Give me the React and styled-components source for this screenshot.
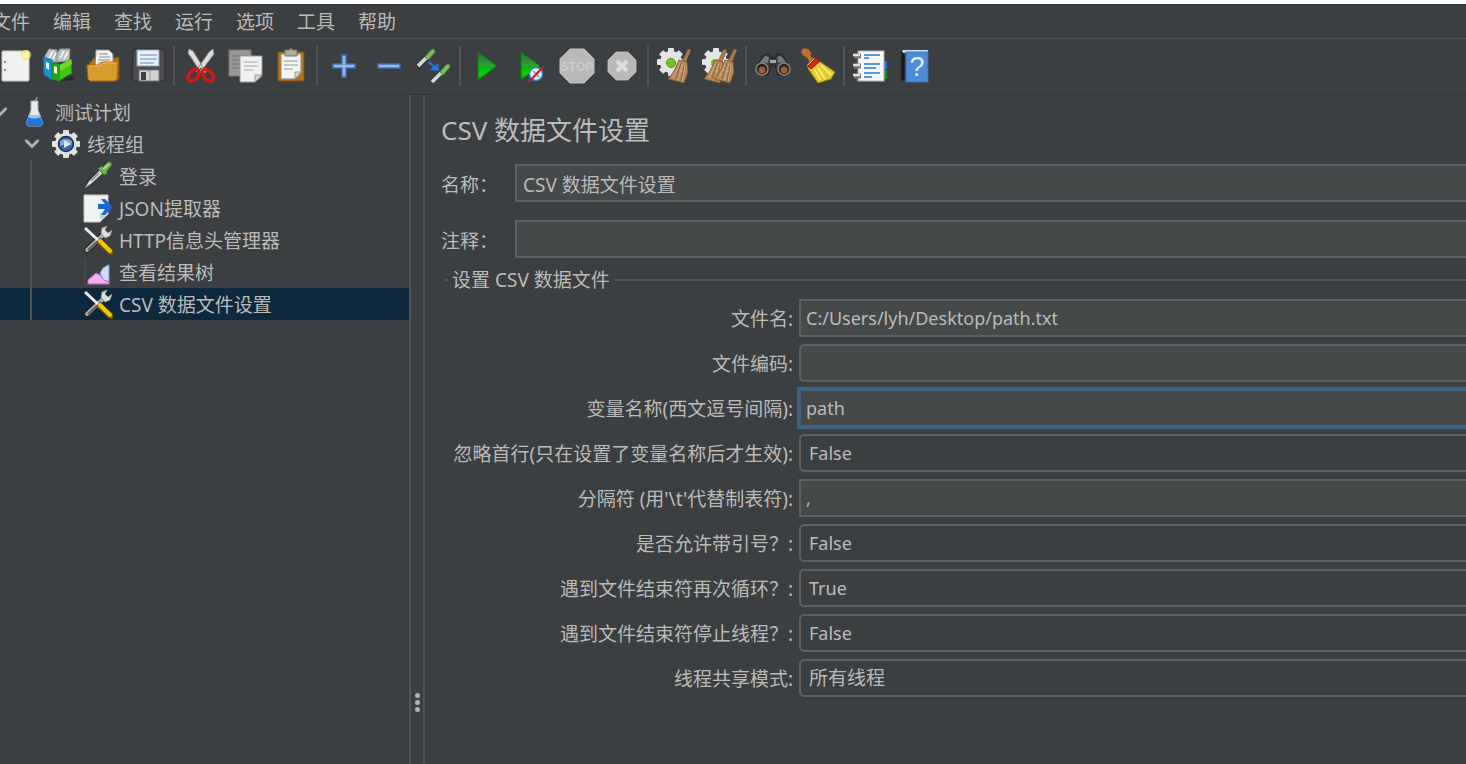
import React, { useState } from 'react';
import styled, { createGlobalStyle, ThemeProvider } from 'styled-components';

const theme = {
  colors: {
    background: '#3c3f41',
    field: '#45494a',
    fieldBorder: '#5e6061',
    line: '#515355',
    darkLine: '#333638',
    text: '#bbbbbb',
    selection: '#0d293e',
    focus: '#3d6185',
  },
  fonts: {
    body: '"Noto Sans", "Noto Sans CJK SC", sans-serif',
  },
  fontSizes: {
    sm: '18px',
    md: '19px',
    xl: '26px',
  },
};

const MENUS = ['文件', '编辑', '查找', '运行', '选项', '工具', '帮助'];

const TREE = [
  { id: 'plan', label: '测试计划', icon: 'flask', level: 0, open: true },
  { id: 'group', label: '线程组', icon: 'gear', level: 1, open: true },
  { id: 'login', label: '登录', icon: 'pipette', level: 2 },
  { id: 'json', label: 'JSON提取器', icon: 'extract', level: 2 },
  { id: 'header', label: 'HTTP信息头管理器', icon: 'tools', level: 2 },
  { id: 'results', label: '查看结果树', icon: 'chart', level: 2 },
  { id: 'csv', label: 'CSV 数据文件设置', icon: 'tools', level: 2 },
];

const FIELDS = [
  { id: 'filename', label: '文件名:', value: 'C:/Users/lyh/Desktop/path.txt' },
  { id: 'encoding', label: '文件编码:', value: '', rounded: true },
  { id: 'variables', label: '变量名称(西文逗号间隔):', value: 'path', focused: true },
  { id: 'ignoreFirst', label: '忽略首行(只在设置了变量名称后才生效):', options: ['False', 'True'] },
  { id: 'delimiter', label: "分隔符 (用'\\t'代替制表符):", value: ',' },
  { id: 'quoted', label: '是否允许带引号？:', options: ['False', 'True'] },
  { id: 'recycle', label: '遇到文件结束符再次循环？:', options: ['True', 'False'] },
  { id: 'stopThread', label: '遇到文件结束符停止线程？:', options: ['False', 'True'] },
  { id: 'shareMode', label: '线程共享模式:', options: ['所有线程', '当前线程组', '当前线程'], large: true },
];

const TOOLBAR = [
  [['新建', 'newFile'], ['模板', 'templates'], ['打开', 'open'], ['保存', 'save']],
  [['剪切', 'cut'], ['复制', 'copy'], ['粘贴', 'paste']],
  [['展开', 'plus'], ['折叠', 'minus'], ['切换', 'toggle']],
  [['启动', 'play'], ['不停顿启动', 'playNoPause'], ['停止', 'stop'], ['关闭', 'shutdown']],
  [['清除', 'clear'], ['清除全部', 'clearAll']],
  [['查找', 'search'], ['重置查找', 'broom']],
  [['函数助手', 'list'], ['帮助', 'help']],
];

const App = () => {
  const [selected, setSelected] = useState('csv');

  return (
    <ThemeProvider theme={theme}>
      <GlobalStyle />
      <Screen>
        <Window>
          <MenuBar>
            {MENUS.map(menu => <MenuButton key={menu} type="button">{menu}</MenuButton>)}
          </MenuBar>

          <Toolbar>
            {TOOLBAR.map((group, index) => (
              <React.Fragment key={group[0][1]}>
                {index > 0 && <Separator />}
                {group.map(([title, icon]) => (
                  <ToolButton key={icon} type="button" aria-label={title}>
                    <svg viewBox="0 0 36 36">{ICONS[icon]}</svg>
                  </ToolButton>
                ))}
              </React.Fragment>
            ))}
          </Toolbar>

          <Workspace>
            <TreePanel>
              {TREE.map(node => (
                <TreeRow
                  key={node.id}
                  type="button"
                  $selected={node.id === selected}
                  onClick={() => setSelected(node.id)}
                >
                  {node.level > 0 && <Indent />}
                  {node.level > 1 && <Guide />}
                  <Expander>{node.open && <ChevronIcon />}</Expander>
                  <NodeIcon viewBox="0 0 30 30">{ICONS[node.icon]}</NodeIcon>
                  <NodeLabel>{node.label}</NodeLabel>
                </TreeRow>
              ))}
            </TreePanel>

            <Splitter>
              <Dot />
              <Dot />
              <Dot />
            </Splitter>

            <Editor>
              <Title>CSV 数据文件设置</Title>
              <InfoRow>
                <InfoLabel htmlFor="name">名称：</InfoLabel>
                <TextField id="name" defaultValue="CSV 数据文件设置" $large />
              </InfoRow>
              <InfoRow>
                <InfoLabel htmlFor="comment">注释：</InfoLabel>
                <TextField id="comment" $large />
              </InfoRow>

              <Group>
                <Legend>设置 CSV 数据文件</Legend>
                <Fields>
                  {FIELDS.map(field => (
                    <React.Fragment key={field.id}>
                      <FieldLabel htmlFor={field.id}>{field.label}</FieldLabel>
                      {field.options ? (
                        <SelectField id={field.id} $large={field.large}>
                          {field.options.map(option => <option key={option}>{option}</option>)}
                        </SelectField>
                      ) : (
                        <TextField
                          id={field.id}
                          defaultValue={field.value}
                          $rounded={field.rounded}
                          $focused={field.focused}
                        />
                      )}
                    </React.Fragment>
                  ))}
                </Fields>
              </Group>
            </Editor>
          </Workspace>
        </Window>
      </Screen>
    </ThemeProvider>
  );
};

const GlobalStyle = createGlobalStyle`
  * {
    box-sizing: border-box;
  }

  body {
    margin: 0;
    background-color: ${theme.colors.background};
  }

  button, input, select {
    font: inherit;
    color: inherit;
  }
`;

const Screen = styled.div`
  min-height: 100vh;
  display: flex;
  flex-direction: column;
  overflow: hidden;
  border-top: 4px solid #ffffff;
`;

// The window hangs over both sides of the screen
const Window = styled.div`
  flex: 1;
  display: flex;
  flex-direction: column;
  margin: 0 -12px;
  background-color: ${props => props.theme.colors.background};
  color: ${props => props.theme.colors.text};
  font-family: ${props => props.theme.fonts.body};
  font-size: ${props => props.theme.fontSizes.md};
  line-height: 32px;
`;

const MenuBar = styled.nav`
  display: flex;
  gap: 23px;
  height: 35px;
  padding: 0 4px;
  border-top: 1px solid ${props => props.theme.colors.darkLine};
  border-bottom: 1px solid ${props => props.theme.colors.line};
`;

const MenuButton = styled.button`
  padding: 0;
  border: none;
  background: none;
`;

const Toolbar = styled.div`
  display: flex;
  align-items: center;
  height: 56px;
  padding: 0 2px 2px;
  border-bottom: 1px solid ${props => props.theme.colors.darkLine};
`;

const ToolButton = styled.button`
  display: flex;
  justify-content: center;
  flex: none;
  width: 45px;
  padding: 0;
  border: none;
  background: none;

  svg {
    width: 36px;
    height: 36px;
  }
`;

const Separator = styled.span`
  flex: none;
  width: 2px;
  height: 40px;
  margin: 0 3px;
  background-color: ${props => props.theme.colors.line};
`;

const Workspace = styled.div`
  flex: 1;
  display: flex;
`;

const TreePanel = styled.div`
  flex: none;
  width: 421px;
  padding-top: 1px;
`;

const TreeRow = styled.button`
  display: flex;
  align-items: center;
  width: 100%;
  height: 32px;
  padding: 0;
  border: none;
  text-align: left;
  white-space: nowrap;
  background-color: ${props => props.$selected ? props.theme.colors.selection : 'transparent'};
`;

const Indent = styled.span`
  width: 32px;
`;

const Guide = styled.span`
  align-self: stretch;
  width: 22px;
  margin-left: 10px;
  border-left: 2px solid ${props => props.theme.colors.line};
`;

const Expander = styled.span`
  display: flex;
  justify-content: center;
  width: 23px;
`;

const NodeIcon = styled.svg`
  width: 30px;
  height: 30px;
  margin: 0 6px 0 8px;
`;

const NodeLabel = styled.span`
  padding-top: 2px;
`;

const Splitter = styled.div`
  display: flex;
  flex-direction: column;
  justify-content: flex-end;
  align-items: center;
  gap: 2px;
  flex: none;
  width: 16px;
  padding-bottom: 52px;
  border: solid ${props => props.theme.colors.line};
  border-width: 0 2px;
`;

const Dot = styled.span`
  width: 5px;
  height: 5px;
  border-radius: 50%;
  background-color: #afb1b3;
`;

const Editor = styled.main`
  flex: 1;
  display: flex;
  flex-direction: column;
  min-width: 0;
  padding: 17px 0 0 16px;
`;

const Title = styled.h1`
  margin: 0 0 16px;
  font-size: ${props => props.theme.fontSizes.xl};
  font-weight: 400;
  line-height: 36px;
`;

const InfoRow = styled.div`
  display: flex;
  align-items: center;
  margin-bottom: 18px;
`;

const InfoLabel = styled.label`
  flex: none;
  width: 74px;
  padding-top: 4px;
`;

const TextField = styled.input`
  flex: 1;
  min-width: 0;
  height: 38px;
  padding: ${props => props.$large ? '2px 6px 0' : '0 5px'};
  outline: none;
  border: 2px solid ${props => props.$focused ? props.theme.colors.focus : props.theme.colors.fieldBorder};
  border-radius: ${props => props.$rounded ? '5px' : '0'};
  box-shadow: ${props => props.$focused ? `0 0 0 2px ${props.theme.colors.focus}` : 'none'};
  background-color: ${props => props.theme.colors.field};
  font-size: ${props => props.$large ? props.theme.fontSizes.md : props.theme.fontSizes.sm};
`;

const SelectField = styled.select`
  appearance: none;
  min-width: 0;
  height: 38px;
  padding: 0 8px;
  border: 2px solid ${props => props.theme.colors.fieldBorder};
  border-radius: 5px;
  background-color: ${props => props.theme.colors.background};
  font-size: ${props => props.$large ? props.theme.fontSizes.md : props.theme.fontSizes.sm};
`;

const Group = styled.fieldset`
  min-width: 0;
  margin: -8px 0 0 4px;
  padding: 0;
  border: 0 solid ${props => props.theme.colors.line};
  border-top-width: 2px;
`;

const Legend = styled.legend`
  margin-left: 3px;
  padding: 0 4px;
  line-height: 24px;
`;

const Fields = styled.div`
  display: grid;
  grid-template-columns: 348px 1fr;
  gap: 7px 6px;
  align-items: center;
  padding-top: 7px;
`;

const FieldLabel = styled.label`
  padding-top: 2px;
  text-align: right;
  white-space: nowrap;
`;

const ChevronIcon = () => (
  <svg width="16" height="12" viewBox="0 0 16 12" fill="none" stroke="#afb1b3" strokeWidth="3">
    <path d="M1.5 2 8 8.5 14.5 2" />
  </svg>
);

const Octagon = ({ r, label }) => (
  <>
    <path
      d="M-7.5-18H7.5L18-7.5V7.5L7.5 18H-7.5L-18 7.5V-7.5Z"
      transform={`translate(18 18) scale(${r / 18})`}
      fill="#b9b9b9"
      stroke="#c8c8c8"
    />
    {label}
  </>
);

const GearShape = ({ color = '#e4e4e4' }) => (
  <g>
    {[0, 45, 90, 135].map(angle => (
      <rect key={angle} x="-3" y="-14" width="6" height="28" rx="1" fill={color} transform={`rotate(${angle})`} />
    ))}
    <circle r="11" fill={color} />
  </g>
);

const BroomBrush = ({ x = 0 }) => (
  <g transform={`translate(${x} 0)`}>
    <path d="M31 1 34 2 29 14 25 13Z" fill="#a97c50" stroke="#70502f" strokeWidth=".6" />
    <path d="M22 12 30 14 31 24 27 35 11 31 17 23Z" fill="#b58a5d" stroke="#755431" strokeWidth=".8" />
    <path d="M23 15 16 30M26 16 21 32M28 17 25 33M20 22 27 24" stroke="#d3ab7c" strokeWidth="1" fill="none" />
    <path d="M24 15 19 31M27 17 24 33" stroke="#74512d" strokeWidth=".7" fill="none" />
  </g>
);

const PipetteShape = () => (
  <>
    <path d="M1 28 4 20 17 8 21 12 9 24Z" fill="#2b2d2e" />
    <path d="M2 27 6 20 17 9 20 12 8 23Z" fill="#dcdedd" stroke="#777" strokeWidth=".7" />
    <path d="M8 20 16 12" stroke="#8a8e8d" strokeWidth="1.5" />
    <path d="M15 8 18 5 20 6 25 1 28 1 29 4 24 10 24 13 21 14Z" fill="#6eb44d" stroke="#356b28" strokeWidth=".8" />
    <path d="M20 8 26 3" stroke="#abdc8e" strokeWidth="2" />
  </>
);

const PlayShape = () => (
  <>
    <defs>
      <linearGradient id="play" x1="0" y1="0" x2="0" y2="1">
        <stop offset="0" stopColor="#1d7a22" />
        <stop offset=".5" stopColor="#3a9c3e" />
        <stop offset=".52" stopColor="#07b30b" />
        <stop offset=".8" stopColor="#04d408" />
        <stop offset="1" stopColor="#07920a" />
      </linearGradient>
    </defs>
    <path d="M9 4 28 18 9 32Z" fill="url(#play)" stroke="#0c7a10" />
  </>
);

const ICONS = {
  newFile: (
    <>
      <rect x="7" y="3" width="27" height="30" rx="1" fill="#f0f0f0" stroke="#c7c7c7" />
      <path d="M10 13v2M10 21v2" stroke="#8a8a8a" strokeWidth="2" />
      <circle cx="31" cy="7" r="5" fill="#f6e65a" opacity=".75" />
      <circle cx="31" cy="7" r="3" fill="#fff8b8" />
    </>
  ),
  templates: (
    <>
      <ellipse cx="24" cy="30" rx="11" ry="3" fill="#292c2d" />
      <path d="M5 8 9 1 17 2 17 14 5 14ZM16 8 20 1 30 1 29 13 16 14Z" fill="#b9c2c6" stroke="#8b979c" />
      <path d="M9 10 13 3M13 11 16 5M20 10 24 3M24 11 28 4" stroke="#ffffff" strokeWidth="1.5" />
      <path d="M3 9 12 12V32L4 27Z" fill="#1b91d5" stroke="#1269a4" />
      <path d="M6 14 9 15V22L6 20Z" fill="#e5f3fa" />
      <path d="M12 14 20 17 31 11 32 25 19 33 12 31Z" fill="#48bf13" stroke="#27860c" />
      <path d="M12 14 20 17V33L12 31Z" fill="#20a319" />
      <path d="M20 17 31 11 32 16 20 23Z" fill="#70d629" />
      <path d="M14 18 17 19V26L14 25Z" fill="#f0f7e9" />
    </>
  ),
  open: (
    <>
      <path d="M4 16 9 10H29L34 9V31L31 33H5Z" fill="#ad7414" stroke="#80520a" />
      <path d="M11 2H24L28 6V20H10Z" fill="#f2f2f2" stroke="#8e8e8e" />
      <path d="M14 6H23M14 9H25M13 12H25M13 15H25" stroke="#898989" />
      <path d="M2 17H14L17 14H33L32 31 30 33H5L3 31Z" fill="#d79b2c" stroke="#a36b0d" />
      <path d="M4 18H15L18 15H31" stroke="#f0bd58" fill="none" />
    </>
  ),
  save: (
    <>
      <path d="M3 3 6 1H33L35 4V33H5L2 30Z" fill="#4d4d50" stroke="#282828" />
      <rect x="7" y="2" width="22" height="16" fill="#e9f1f7" stroke="#8ba2b6" />
      <path d="M10 7H27M10 11H27M10 15H24" stroke="#91acd0" strokeWidth="1.5" />
      <rect x="9" y="22" width="20" height="11" fill="#d2d2d2" stroke="#777" />
      <rect x="11" y="24" width="5" height="8" fill="#3d3d3e" />
      <path d="M17 23H20V32" stroke="#9a9a9a" fill="none" />
    </>
  ),
  cut: (
    <>
      <path d="M6 1 10 3 23 24 19 26 5 5ZM30 1 31 6 16 26 13 23 26 4Z" fill="#dededd" stroke="#888" />
      <path d="M14 21C18 23 16 32 8 33C2 34 5 22 14 21ZM22 21C17 23 20 32 27 33C34 33 30 23 22 21Z" fill="none" stroke="#d61717" strokeWidth="3.5" />
      <circle cx="18" cy="21" r="1.5" fill="#686868" />
    </>
  ),
  copy: (
    <>
      <rect x="1" y="2" width="22" height="26" fill="#979797" stroke="#777" />
      <path d="M4 8H19M4 12H15M4 16H13M4 20H13" stroke="#717171" />
      <path d="M12 8H34V28L27 34H12Z" fill="#f1f1ef" stroke="#9a9a98" />
      <path d="M16 14H30M16 18H30M16 22H25" stroke="#a4a4a2" />
      <path d="M34 27H27V34Z" fill="#d6d6d3" stroke="#999" />
    </>
  ),
  paste: (
    <>
      <rect x="5" y="4" width="26" height="29" rx="1" fill="#b3741a" stroke="#86530b" />
      <path d="M8 6H28V25L22 31H8Z" fill="#f4f4f2" stroke="#8e8b84" />
      <path d="M12 2H16Q18-1 20 2H24V8H12Z" fill="#adad9d" stroke="#70705f" />
      <path d="M11 13H25M11 17H25M11 21H20" stroke="#969692" />
      <path d="M28 24H22V31Z" fill="#d8d8d5" stroke="#999" />
    </>
  ),
  plus: <path d="M16 7H20V16H29V20H20V29H16V20H7V16H16Z" fill="#9dbbe0" stroke="#3b72bd" strokeWidth="1.5" />,
  minus: <path d="M7 16H29V20H7Z" fill="#9dbbe0" stroke="#3b72bd" strokeWidth="1.5" />,
  toggle: (
    <>
      <path d="M2 18 11 9M16 34 25 25" stroke="#d6d9da" strokeWidth="3.5" />
      <path d="M9 9 15 2 18 1 19 4 12 12ZM24 24 30 17 33 16 34 19 27 27Z" fill="#7fbd61" stroke="#508e38" />
      <path d="M14 13 19 18 22 15 23 23 14 22 17 19 12 15Z" fill="#2474dd" />
    </>
  ),
  play: <PlayShape />,
  playNoPause: (
    <>
      <g transform="translate(-2 0)"><PlayShape /></g>
      <circle cx="22" cy="26" r="6.5" fill="#e8f2fc" stroke="#3f83cf" strokeWidth="1.5" />
      <path d="M19 23 25 29M19 29 25 23" stroke="#9cabb8" strokeWidth="2" />
      <path d="M15 34 29 19" stroke="#d81b20" strokeWidth="2" />
    </>
  ),
  stop: (
    <Octagon
      r={17}
      label={<text x="18" y="23" textAnchor="middle" fontFamily="Liberation Sans" fontWeight="700" fontSize="12" fill="#cccccc">STOP</text>}
    />
  ),
  shutdown: <Octagon r={14} label={<path d="M13 13 23 23M23 13 13 23" stroke="#dedede" strokeWidth="4" />} />,
  clear: (
    <>
      <g transform="translate(14 14)"><GearShape /></g>
      <circle cx="14" cy="15" r="4.5" fill="#72c817" stroke="#4d9411" />
      <BroomBrush />
    </>
  ),
  clearAll: (
    <>
      <g transform="translate(14 14)"><GearShape /></g>
      <circle cx="13" cy="15" r="4" fill="#72c817" />
      <BroomBrush x={-9} />
      <BroomBrush x={1} />
    </>
  ),
  search: (
    <>
      <path d="M1 19 8 8 11 6H14L16 10H20L22 6H25L28 8 35 19 31 27H23L20 17H16L13 27H5Z" fill="#3a3b3c" stroke="#1e1f20" />
      <path d="M5 14 10 8 14 9 13 15ZM31 14 26 8 22 9 23 15Z" fill="#77797a" />
      <path d="M15 12H21V15H15Z" fill="#a5a5a5" />
      <ellipse cx="7" cy="21" rx="6" ry="6" fill="#241f1d" stroke="#8a8785" strokeWidth="1.5" />
      <ellipse cx="29" cy="21" rx="6" ry="6" fill="#241f1d" stroke="#8a8785" strokeWidth="1.5" />
      <circle cx="7" cy="22" r="3.5" fill="#9a5e32" />
      <circle cx="29" cy="22" r="3.5" fill="#9a5e32" />
    </>
  ),
  broom: (
    <>
      <path d="M2 1Q5-1 8 1L11 4V9L14 11 10 15 7 10Q2 8 1 4Z" fill="#b77332" stroke="#79491d" />
      <path d="M14 10 19 13 35 24 31 31 18 35 9 22 7 17Z" fill="#e4cb2f" stroke="#998512" />
      <path d="M8 18 16 10 20 13 11 21Z" fill="#d32822" stroke="#8d1512" />
      <path d="M15 22 20 32M18 20 25 31M21 17 31 27" stroke="#fff080" strokeWidth="1.5" />
    </>
  ),
  list: (
    <>
      <path d="M29 13H34V21H29Z" fill="#2375dc" />
      <path d="M29 22H34V31H29Z" fill="#149322" />
      <rect x="5" y="3" width="26" height="30" fill="#f6f6f6" stroke="#b0b0b0" />
      <path d="M1 8H8M1 18H8M1 28H8" stroke="#777" strokeWidth="5" />
      <path d="M0 7H7M0 17H7M0 27H7" stroke="#e0e0e0" strokeWidth="2.5" />
      <path d="M11 7H27M11 10H16M11 16H27M11 20H23M11 25H27M11 29H19" stroke="#2a74dc" strokeWidth="1.5" />
    </>
  ),
  help: (
    <>
      <path d="M3 4 7 2V31L3 34Z" fill="#171819" stroke="#343638" />
      <path d="M4 2H30V5H5Z" fill="#d1dff2" />
      <rect x="8" y="4" width="22" height="30" fill="#4e8bd8" stroke="#3972bd" />
      <text x="19" y="28" textAnchor="middle" fontFamily="Liberation Sans" fontSize="27" fill="#e8f2ff">?</text>
    </>
  ),
  flask: (
    <>
      <path d="M16 5 18 0" stroke="#8f9699" strokeWidth="1.5" />
      <path d="M12 4H19V13L24 27 22 29H9L7 27 12 13Z" fill="#e6edf1" stroke="#a2b1bc" />
      <path d="M10 19H21L24 27 22 29H9L7 27Z" fill="#1b74e0" />
      <path d="M10 18H21L22 20Q16 23 9 20Z" fill="#9bc6ed" />
    </>
  ),
  gear: (
    <>
      <g transform="translate(15 15)"><GearShape color="#e2e2df" /></g>
      <circle cx="15" cy="15" r="7.5" fill="#3566aa" stroke="#182f58" strokeWidth="1.5" />
      <path d="M9 12Q15 8 21 12L20 16Q14 14 9 17Z" fill="#86a8d4" />
      <path d="M13 11 20 15 13 19Z" fill="#dce9f9" />
    </>
  ),
  pipette: <PipetteShape />,
  extract: (
    <>
      <path d="M1 2H25V21L17 29H1Z" fill="#f1f3f3" stroke="#c4c8c8" />
      <path d="M25 20H17V29Z" fill="#c9d7d8" />
      <path d="M15 11H22L18 6H22L30 14 22 22H18L22 16H15Z" fill="#1769cf" />
    </>
  ),
  tools: (
    <>
      <path d="M4 25 20 10" stroke="#1f2122" strokeWidth="6" strokeLinecap="round" />
      <path d="M4 25 20 10" stroke="#a9aaa7" strokeWidth="4" strokeLinecap="round" />
      <path d="M5 25 18 13" stroke="#4e504f" strokeWidth="1.5" />
      <path d="M18 8 19 3 24 1 22 5 25 8 29 5 27 11 22 13Z" fill="#dededb" stroke="#888" strokeWidth=".7" />
      <path d="M2 3 16 16" stroke="#efefed" strokeWidth="3" />
      <path d="M17 17 28 27" stroke="#795c00" strokeWidth="6" strokeLinecap="round" />
      <path d="M17 16 27 26" stroke="#f0c413" strokeWidth="4" strokeLinecap="round" />
    </>
  ),
  chart: (
    <>
      <path d="M2 3V28H27" stroke="#555b5f" strokeDasharray="2 1" fill="none" />
      <path d="M17 16 20 11 25 8H26V26L20 23Z" fill="#c9dcf8" stroke="#7798cb" />
      <path d="M5 23 13 16 17 18 21 23 26 25V27H5Z" fill="#f3aeec" stroke="#c764ba" />
    </>
  ),
};

export default App;
